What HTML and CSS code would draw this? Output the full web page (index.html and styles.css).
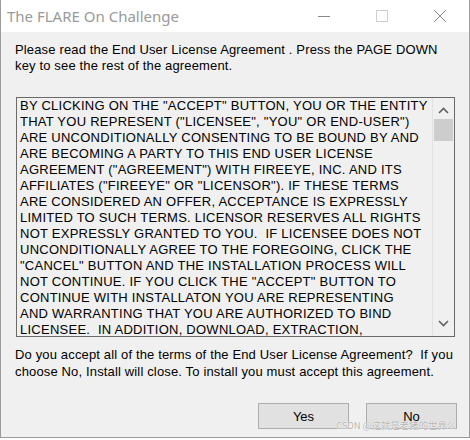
FILE: index.html
```html
<!DOCTYPE html>
<html>
<head>
<meta charset="utf-8">
<link rel="stylesheet" href="styles.css">
</head>
<body>
<div class="window">
  <div class="titlebar">
    <span class="title">The FLARE On Challenge</span>
    <div class="controls">
      <svg class="ctl" width="58" height="32" viewBox="0 0 58 32"><line x1="23" y1="16.5" x2="35" y2="16.5" stroke="#8a8a8a" stroke-width="1"/></svg>
      <svg class="ctl" width="58" height="32" viewBox="0 0 58 32"><rect x="23.5" y="10.5" width="11" height="11" fill="none" stroke="#cfcfcf" stroke-width="1"/></svg>
      <svg class="ctl" width="58" height="32" viewBox="0 0 58 32"><path d="M23 10 L35 22 M35 10 L23 22" stroke="#8a8a8a" stroke-width="1" fill="none"/></svg>
    </div>
  </div>
  <div class="content">
    <p class="intro">Please read the End User License Agreement . Press the PAGE DOWN<br>key to see the rest of the agreement.</p>
    <div class="license">
      <div class="license-text">BY CLICKING ON THE "ACCEPT" BUTTON, YOU OR THE ENTITY<br>THAT YOU REPRESENT ("LICENSEE", "YOU" OR END-USER")<br>ARE UNCONDITIONALLY CONSENTING TO BE BOUND BY AND<br>ARE BECOMING A PARTY TO THIS END USER LICENSE<br>AGREEMENT ("AGREEMENT") WITH FIREEYE, INC. AND ITS<br>AFFILIATES ("FIREEYE" OR "LICENSOR"). IF THESE TERMS<br>ARE CONSIDERED AN OFFER, ACCEPTANCE IS EXPRESSLY<br>LIMITED TO SUCH TERMS. LICENSOR RESERVES ALL RIGHTS<br>NOT EXPRESSLY GRANTED TO YOU.&nbsp; IF LICENSEE DOES NOT<br>UNCONDITIONALLY AGREE TO THE FOREGOING, CLICK THE<br>"CANCEL" BUTTON AND THE INSTALLATION PROCESS WILL<br>NOT CONTINUE. IF YOU CLICK THE "ACCEPT" BUTTON TO<br>CONTINUE WITH INSTALLATON YOU ARE REPRESENTING<br>AND WARRANTING THAT YOU ARE AUTHORIZED TO BIND<br>LICENSEE.&nbsp; IN ADDITION, DOWNLOAD, EXTRACTION,</div>
      <div class="scrollbar">
        <svg class="arrow" width="21" height="17" viewBox="0 0 21 17"><path d="M6 11 L10.5 6.5 L15 11" stroke="#606060" stroke-width="1.6" fill="none"/></svg>
        <div class="thumb"></div>
        <div class="track"></div>
        <svg class="arrow" width="21" height="17" viewBox="0 0 21 17"><path d="M6 6 L10.5 10.5 L15 6" stroke="#606060" stroke-width="1.6" fill="none"/></svg>
      </div>
    </div>
    <p class="question">Do you accept all of the terms of the End User License Agreement?&nbsp; If you<br>choose No, Install will close. To install you must accept this agreement.</p>
    <div class="buttons">
      <button class="btn">Yes</button>
      <button class="btn">No</button>
    </div>
    <span class="watermark">CSDN @这就是老猪的世界么</span>
  </div>
</div>
</body>
</html>
```

FILE: styles.css
```css
html, body {
  margin: 0;
  padding: 0;
  background: #ffffff;
}
.window {
  width: 468px;
  height: 437px;
  border-left: 1px solid #9c9c9c;
  border-right: 1px solid #9c9c9c;
  border-bottom: 1px solid #9c9c9c;
  display: flex;
  flex-direction: column;
  font-family: "Liberation Sans", Arial, sans-serif;
}
.titlebar {
  height: 32px;
  background: #ffffff;
  display: flex;
  align-items: center;
  justify-content: space-between;
}
.title {
  font-family: "Noto Sans", "Open Sans", sans-serif;
  font-size: 15px;
  color: #9a9a9a;
  padding-left: 6px;
  padding-bottom: 1px;
}
.controls {
  display: flex;
}
.ctl {
  display: block;
}
.content {
  position: relative;
  flex: 1;
  background: #f0f0f0;
  padding: 10px 0 0 14px;
  display: flex;
  flex-direction: column;
}
.intro, .question {
  margin: 0;
  font-size: 13px;
  letter-spacing: 0.15px;
  line-height: 16px;
  color: #000;
  white-space: nowrap;
}
.license {
  margin-top: 23px;
  margin-left: 1px;
  width: 437px;
  height: 238px;
  border: 1px solid #6a6a6a;
  display: flex;
  overflow: hidden;
  background: #f0f0f0;
}
.license-text {
  flex: 1;
  padding: 0 0 0 3px;
  font-size: 13px;
  letter-spacing: 0.25px;
  line-height: 16px;
  color: #000;
  white-space: nowrap;
  overflow: hidden;
}
.scrollbar {
  width: 21px;
  border-left: 1px solid #e2e2e2;
  display: flex;
  flex-direction: column;
  align-items: center;
}
.arrow {
  display: block;
  margin-top: 4px;
}
.thumb {
  width: 19px;
  height: 22px;
  background: #cdcdcd;
}
.track {
  flex: 1;
}
.scrollbar .arrow:last-child {
  margin-top: 0;
  margin-bottom: 4px;
}
.question {
  margin-top: 9px;
  line-height: 17px;
}
.buttons {
  display: flex;
  gap: 17px;
  justify-content: flex-end;
  padding-right: 12px;
  margin-top: 23px;
}
.btn {
  width: 91px;
  height: 26px;
  background: #e1e1e1;
  border: 1px solid #adadad;
  font-family: "Liberation Sans", Arial, sans-serif;
  font-size: 13px;
  color: #000;
  padding: 0;
}
.watermark {
  position: absolute;
  right: 13px;
  bottom: 6px;
  font-family: "Noto Sans CJK SC", sans-serif;
  font-size: 9.5px;
  line-height: 12px;
  color: #b4b4b4;
  text-shadow: 0 0 1px #ffffff, 0 0 1px #ffffff;
  letter-spacing: -0.1px;
}
```
